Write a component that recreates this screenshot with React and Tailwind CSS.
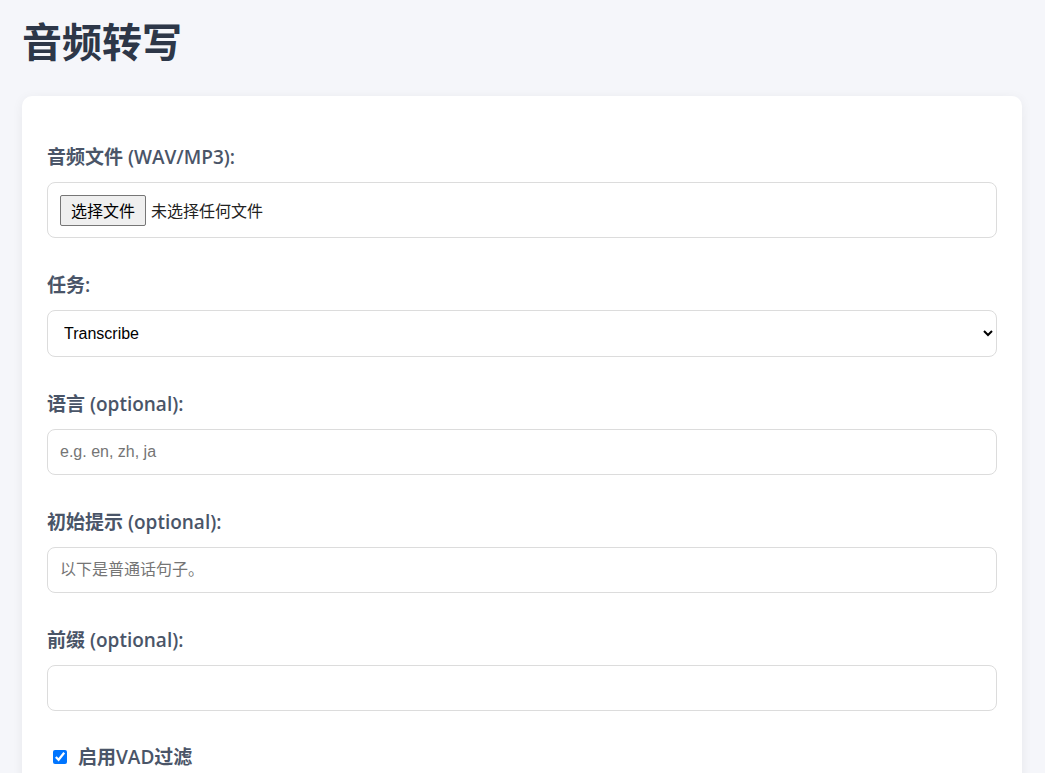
const labelCls =
  'block text-[19px] leading-[26px] font-semibold text-[#4a5568] mb-[12px] [font-family:"Open_Sans","Noto_Sans_CJK_SC",sans-serif]'
const inputCls =
  'block w-full h-[46px] px-[12px] rounded-[8px] border border-[#dcdcdc] bg-white text-[16px] text-black placeholder:text-[#757575] outline-none [font-family:"Liberation_Sans","Noto_Sans_CJK_SC",sans-serif]'

function Field({ label, children, last }) {
  return (
    <div className={last ? 'mb-[33px]' : 'mb-[34px]'}>
      <label className={labelCls}>{label}</label>
      {children}
    </div>
  )
}

export default function App() {
  return (
    <div className="min-h-screen bg-[#f5f6fa] pl-[22px] pr-[23px] pt-[16px] pb-10">
      <h1 className="text-[40px] leading-[48px] font-bold text-[#2d3748] mb-[32px] [font-family:'Noto_Sans_CJK_SC',sans-serif]">
        音频转写
      </h1>

      <div className="bg-white rounded-[10px] shadow-[0_2px_12px_rgba(0,0,0,0.06)] px-[25px] pt-[48px] pb-8">
        <Field label="音频文件 (WAV/MP3):">
          <div className="flex items-center h-[56px] px-[12px] rounded-[8px] border border-[#dcdcdc] [font-family:'Noto_Sans_CJK_SC',sans-serif] text-[16px]">
            <span className="inline-flex items-center h-[31px] px-[10px] bg-[#efefef] border border-[#767676] rounded-[2px] text-black">
              选择文件
            </span>
            <span className="ml-[5px] text-[#222]">未选择任何文件</span>
          </div>
        </Field>

        <Field label="任务:">
          <select className={inputCls + ' h-[47px]'} defaultValue="transcribe">
            <option value="transcribe">Transcribe</option>
            <option value="translate">Translate</option>
          </select>
        </Field>

        <Field label="语言 (optional):">
          <input className={inputCls} placeholder="e.g. en, zh, ja" />
        </Field>

        <Field label="初始提示 (optional):">
          <input className={inputCls} placeholder="以下是普通话句子。" />
        </Field>

        <Field label="前缀 (optional):" last>
          <input className={inputCls} />
        </Field>

        <label className="flex items-center gap-[11px] pl-[6px] text-[19px] leading-[26px] font-semibold text-[#4a5568] [font-family:'Open_Sans','Noto_Sans_CJK_SC',sans-serif]">
          <input type="checkbox" defaultChecked className="w-[14px] h-[14px] m-0 accent-[#0075ff]" />
          启用VAD过滤
        </label>
      </div>
    </div>
  )
}
